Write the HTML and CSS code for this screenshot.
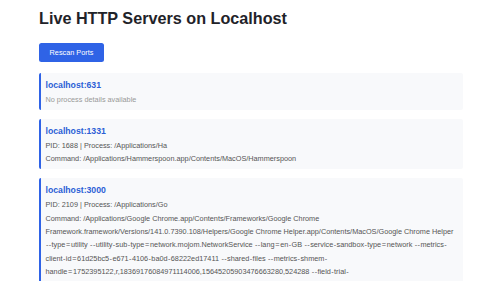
FILE: index.html
```html
<!DOCTYPE html>
<html>
<head>
<meta charset="utf-8">
<link rel="stylesheet" href="styles.css">
</head>
<body>
<div class="page">
  <h1 class="title">Live HTTP Servers on Localhost</h1>
  <button class="rescan">Rescan Ports</button>
  <div class="list">
    <div class="card">
      <div class="host">localhost:631</div>
      <div class="detail muted">No process details available</div>
    </div>
    <div class="card">
      <div class="host">localhost:1331</div>
      <div class="detail">PID: 1688 | Process: /Applications/Ha</div>
      <div class="detail">Command: /Applications/Hammerspoon.app/Contents/MacOS/Hammerspoon</div>
    </div>
    <div class="card">
      <div class="host">localhost:3000</div>
      <div class="detail">PID: 2109 | Process: /Applications/Go</div>
      <div class="detail">Command: /Applications/Google Chrome.app/Contents/Frameworks/Google Chrome Framework.framework/Versions/141.0.7390.108/Helpers/Google Chrome Helper.app/Contents/MacOS/Google Chrome Helper <span class="h">--</span>type<span class="q">=</span>utility <span class="h">--</span>utility<span class="h">-</span>sub<span class="h">-</span>type<span class="q">=</span>network.mojom.NetworkService <span class="h">--</span>lang<span class="q">=</span>en<span class="h">-</span>GB <span class="h">--</span>service<span class="h">-</span>sandbox<span class="h">-</span>type<span class="q">=</span>network <span class="h">--</span>metrics<span class="h">-</span>client<span class="h">-</span>id<span class="q">=</span>61d25bc5<span class="h">-</span>e671<span class="h">-</span>4106<span class="h">-</span>ba0d<span class="h">-</span>68222ed17411 <span class="h">--</span>shared<span class="h">-</span>files <span class="h">--</span>metrics<span class="h">-</span>shmem<span class="h">-</span>handle<span class="q">=</span>1752395122,r,18369176084971114006,15645205903476663280,524288 <span class="h">--</span>field<span class="h">-</span>trial<span class="h">-</span>handle<span class="q">=</span>1718379636,r,1090915137781562330,15459046419577094426,262144 <span class="h">--</span>variations<span class="h">-</span>seed<span class="h">-</span>version</div>
    </div>
  </div>
</div>
</body>
</html>
```

FILE: styles.css
```css
html, body {
  margin: 0;
  padding: 0;
  background: #ffffff;
}
body {
  font-family: "Liberation Sans", Arial, sans-serif;
  color: #222;
}
.page {
  padding: 0 37px 0 39px;
}
.title {
  margin: 0;
  padding-top: 8px;
  font-size: 16.2px;
  line-height: 20px;
  font-weight: 700;
  color: #1f2329;
}
.rescan {
  display: block;
  margin-top: 15px;
  width: 65px;
  height: 19px;
  padding: 0;
  border: none;
  border-radius: 2.5px;
  background: #2f63e6;
  color: #fff;
  font-family: "Liberation Sans", Arial, sans-serif;
  font-size: 7.3px;
}
.list {
  margin-top: 11px;
  display: flex;
  flex-direction: column;
  gap: 8.7px;
}
.card {
  background: #f8f9fb;
  border-left: 2px solid #2f63e6;
  border-radius: 2px;
  padding: 7px 6px 3.5px 4.5px;
}
.host {
  font-size: 8.7px;
  line-height: 10px;
  font-weight: 700;
  color: #2b5fd6;
  margin-bottom: 3.2px;
}
.detail {
  font-size: 7.3px;
  line-height: 13.4px;
  color: #555;
}
.detail.muted {
  color: #999;
}
.h {
  letter-spacing: 0.4px;
  padding-left: 0.4px;
}
.q {
  padding: 0 0.7px;
}
```
